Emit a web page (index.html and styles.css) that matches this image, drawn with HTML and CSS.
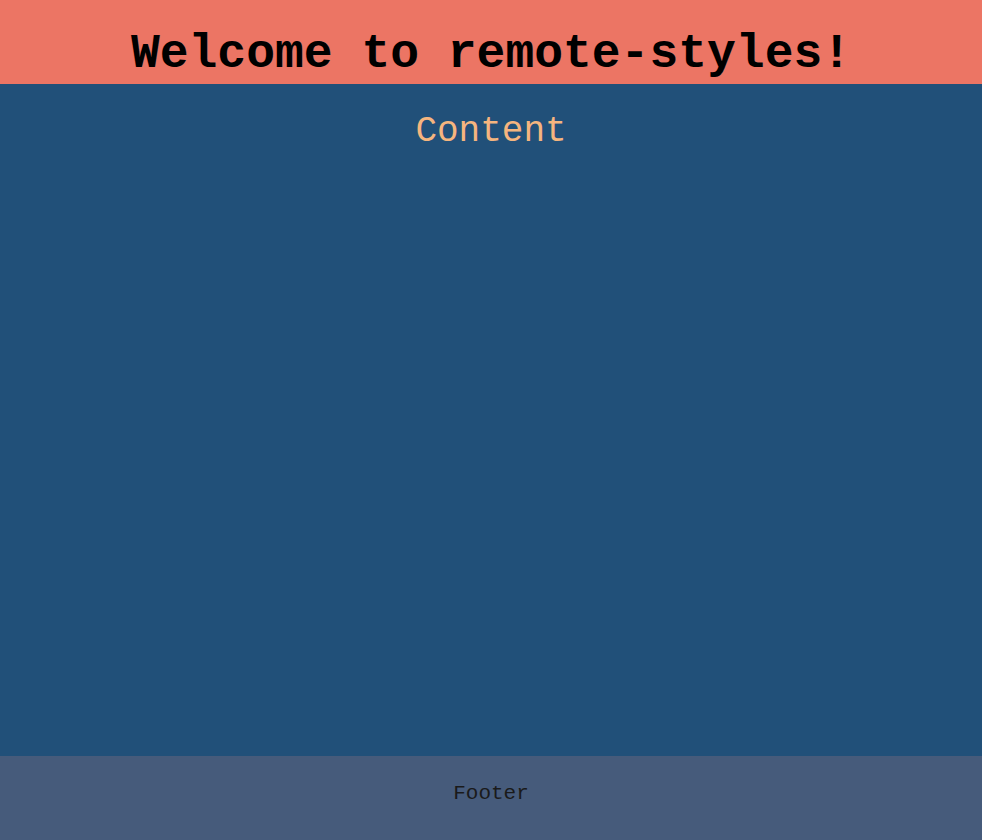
FILE: index.html
```html
<!DOCTYPE html>
<html>
<head>
<meta charset="utf-8">
<link rel="stylesheet" href="styles.css">
</head>
<body>
<div class="page">
  <header class="header"><h1 class="title">Welcome to remote-styles!</h1></header>
  <main class="content"><h2 class="content-title">Content</h2></main>
  <footer class="footer"><span class="footer-text">Footer</span></footer>
</div>
</body>
</html>
```
FILE: styles.css
```css
html, body {
  margin: 0;
  padding: 0;
  height: 100%;
}
body {
  font-family: "Liberation Mono", "Courier New", monospace;
}
.page {
  display: flex;
  flex-direction: column;
  height: 840px;
}
.header {
  height: 84px;
  background: #ec7564;
  display: flex;
  justify-content: center;
  align-items: flex-end;
}
.title {
  margin: 0;
  font-size: 48px;
  font-weight: bold;
  line-height: 48px;
  padding-bottom: 6px;
  color: #000;
}
.content {
  flex: 1;
  background: #215079;
  text-align: center;
  padding-top: 28px;
}
.content-title {
  margin: 0;
  font-size: 36px;
  font-weight: normal;
  line-height: 40px;
  color: #f5b57f;
}
.footer {
  height: 84px;
  background: #465b7b;
  display: flex;
  justify-content: center;
  align-items: center;
  padding-bottom: 10px;
  box-sizing: border-box;
}
.footer-text {
  font-size: 21px;
  color: #1a1a1a;
}
```
